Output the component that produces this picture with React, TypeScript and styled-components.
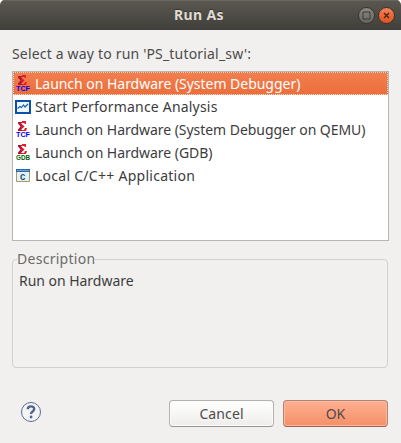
import React from "react";
import styled, { createGlobalStyle } from "styled-components";

const GlobalStyle = createGlobalStyle`
  html, body { margin: 0; padding: 0; background: #fff; }
  * { box-sizing: border-box; }
`;

const Dialog = styled.main`
  display: flex;
  flex-direction: column;
  width: 401px;
  height: 443px;
  overflow: hidden;
  border-radius: 5px 5px 0 0;
  background: #f1f0ee;
  color: #3c3c3c;
  font: 14px/23px "Noto Sans", "Open Sans", sans-serif;
`;

const TitleBar = styled.header`
  display: grid;
  grid-template-columns: 1fr auto 1fr;
  align-items: center;
  flex: none;
  height: 30px;
  padding: 0 6px;
  background: linear-gradient(#5b5850, #403f3a);
  box-shadow: inset 0 1px #69665e;
`;

const Title = styled.h1`
  grid-column: 2;
  margin: 0;
  padding-right: 3px;
  color: #dfdbd2;
  font-size: 14px;
  font-weight: 700;
  line-height: 28px;
  letter-spacing: 0.35px;
  text-shadow: 0 -1px #33322e;
`;

const WindowControls = styled.div`
  display: flex;
  justify-content: flex-end;
  gap: 3px;
`;

const WindowButton = styled.button<{ $close?: boolean }>`
  display: grid;
  place-items: center;
  width: 17px;
  height: 17px;
  padding: 0;
  border: 1px solid #35342f;
  border-radius: 50%;
  background: ${(p) => (p.$close ? "linear-gradient(#f5815a, #e2511c)" : "linear-gradient(#8b8981, #66645d)")};
  svg { display: block; }
`;

const Content = styled.div`
  display: flex;
  flex-direction: column;
  flex: 1;
  padding: 12px 12px 16px;
`;

const Fit = styled.span<{ $spacing: number }>`
  letter-spacing: ${(p) => p.$spacing}px;
  white-space: pre;
`;

const Prompt = styled.div`
  height: 29px;
  color: #4c4c4c;
`;

const List = styled.ul`
  flex: none;
  width: 377px;
  height: 170px;
  margin: 0;
  padding: 0;
  border: 1px solid #b8b5b1;
  background: #fff;
  list-style: none;
`;

const Row = styled.li<{ $selected?: boolean }>`
  display: flex;
  align-items: center;
  gap: 4px;
  height: 23px;
  padding-left: ${(p) => (p.$selected ? 1 : 2)}px;
  border: ${(p) => (p.$selected ? "1px dotted #fbd9c9" : "0")};
  background: ${(p) => (p.$selected ? "linear-gradient(#f37e4e, #ea6f3d)" : "none")};
  color: ${(p) => (p.$selected ? "#fff" : "#3c3c3c")};
  svg { flex: none; }
`;

const Group = styled.fieldset`
  flex: none;
  width: 376px;
  height: 118px;
  margin: 9px 0 0;
  padding: 0 6px;
  min-width: 0;
  border: 1px solid #d3d1ce;
  border-radius: 4px;
`;

const Legend = styled.legend`
  height: 18px;
  margin-left: -2px;
  padding: 0;
  color: #6b6b6b;
  line-height: 18px;
`;

const Description = styled.p`
  margin: 1px 0 0;
`;

const Footer = styled.footer`
  display: flex;
  align-items: center;
  gap: 9px;
  margin-top: auto;
  padding-right: 1px;
`;

const HelpButton = styled.button`
  width: 22px;
  height: 22px;
  margin: 0 auto 4px 8px;
  padding: 0;
  border: 0;
  background: none;
  svg { display: block; }
`;

const ActionButton = styled.button<{ $primary?: boolean }>`
  width: 105px;
  height: 27px;
  padding: 0;
  border: 1px solid ${(p) => (p.$primary ? "#ad8576" : "#b3b1ad")};
  border-bottom-color: ${(p) => (p.$primary ? "#94675a" : "#969491")};
  border-radius: 4px;
  background: ${(p) => (p.$primary ? "linear-gradient(#ffaf91, #f58f67)" : "linear-gradient(#fff, #eeedeb)")};
  box-shadow: inset 0 0 0 1px ${(p) => (p.$primary ? "#ffb89e" : "#fbfbfa")};
  color: #4c4c4c;
  font: inherit;
  line-height: 24px;
`;

const IconLabel = styled.text`
  font: 700 7px "Liberation Sans", sans-serif;
`;

function DebugIcon({ label, color }: { label: string; color: string }) {
  return (
    <svg width="16" height="18" viewBox="0 0 16 18">
      <path d="M3 1h4v1H6l3 3.500L6 9h1v1H3V8.500L5.500 5.500 3 2.500z" fill="#b0183a" />
      <path d="M7 0h4v3h-1L9 2H7zM6 4.500h2.500l1 1-1 1H6l1-1zM7 9h2l1-2h2l-1 3H7z" fill="#ed1c24" />
      <IconLabel x="1" y="16" fill={color} textLength="14" lengthAdjust="spacingAndGlyphs">{label}</IconLabel>
    </svg>
  );
}

function AnalysisIcon() {
  return (
    <svg width="16" height="16" viewBox="0 0 16 16">
      <path d="M1 2h14v12H1z" fill="#eef6ff" stroke="#0b50a8" strokeWidth="2" />
      <path d="M2.5 9.5 5 7.5l1.5 1 2-2.5 1.5 2 3-3" fill="none" stroke="#1660b4" strokeWidth="1.2" />
    </svg>
  );
}

function AppIcon() {
  return (
    <svg width="16" height="16" viewBox="0 0 16 16">
      <path d="M1.5 1.5h13v12h-13z" fill="#e3f2fa" stroke="#a99a62" />
      <path d="M1 1h14v3H1z" fill="#2d66a6" />
      <path d="M2 2h12v1H2z" fill="#70a4d6" />
      <text x="7.8" y="11.5" textAnchor="middle" fill="#174b80" fontFamily="Liberation Mono" fontSize="9" fontWeight="700">C</text>
    </svg>
  );
}

const options = [
  { label: "Launch on Hardware (System Debugger)", spacing: -0.03, icon: <DebugIcon label="TCF" color="#0000f5" /> },
  { label: "Start Performance Analysis", spacing: 0.2, icon: <AnalysisIcon /> },
  { label: "Launch on Hardware (System Debugger on QEMU)", spacing: -0.045, icon: <DebugIcon label="TCF" color="#0000f5" /> },
  { label: "Launch on Hardware (GDB)", spacing: -0.04, icon: <DebugIcon label="GDB" color="#006000" /> },
  { label: "Local C/C++ Application", spacing: 0.27, icon: <AppIcon /> },
];

export default function App() {
  return (
    <>
      <GlobalStyle />
      <Dialog>
        <TitleBar>
          <Title>Run As</Title>
          <WindowControls>
            <WindowButton aria-label="Maximize">
              <svg width="9" height="9"><path d="M1 1h7v7H1z" fill="none" stroke="#3b3a36" /></svg>
            </WindowButton>
            <WindowButton $close aria-label="Close">
              <svg width="9" height="9"><path d="m2 2 5 5m0-5L2 7" stroke="#4a2517" strokeWidth="1.4" /></svg>
            </WindowButton>
          </WindowControls>
        </TitleBar>
        <Content>
          <Prompt><Fit $spacing={0.18}>Select a way to run 'PS_tutorial_sw':</Fit></Prompt>
          <List>
            {options.map((o, i) => (
              <Row key={o.label} $selected={i === 0}>
                {o.icon}
                <Fit $spacing={o.spacing}>{o.label}</Fit>
              </Row>
            ))}
          </List>
          <Group>
            <Legend><Fit $spacing={0.28}>Description</Fit></Legend>
            <Description><Fit $spacing={-0.03}>Run on Hardware</Fit></Description>
          </Group>
          <Footer>
            <HelpButton aria-label="Help">
              <svg width="22" height="22" viewBox="0 0 22 22">
                <circle cx="11" cy="11" r="9.5" fill="#f4f4f5" stroke="#566d99" />
                <path d="M7.8 8.2C7.8 4.5 14.2 4.5 14.2 8c0 2.5-3.2 2.5-3.2 5" fill="none" stroke="#4f6691" strokeWidth="2.4" />
                <circle cx="11.1" cy="16" r="1.4" fill="#4f6691" />
              </svg>
            </HelpButton>
            <ActionButton><Fit $spacing={0.1}>Cancel</Fit></ActionButton>
            <ActionButton $primary>OK</ActionButton>
          </Footer>
        </Content>
      </Dialog>
    </>
  );
}
